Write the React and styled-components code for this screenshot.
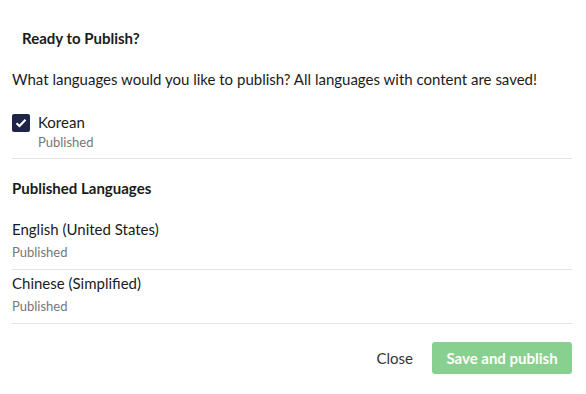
import React from "react";
import styled, { createGlobalStyle } from "styled-components";

const GlobalStyle = createGlobalStyle`
  body {
    margin: 0;
    background: #fff;
    font-family: Lato, "Open Sans", sans-serif;
    color: #1b1b1b;
  }
`;

const Modal = styled.div`
  width: 586px;
  height: 394px;
  box-sizing: border-box;
  padding: 0 14px 0 12px;
  display: flex;
  flex-direction: column;
`;

const Title = styled.h2`
  margin: 0;
  padding: 29px 0 0 10px;
  font-size: 15px;
  font-weight: 700;
  line-height: 18px;
`;

const Intro = styled.p`
  margin: 22px 0 0;
  font-size: 15px;
  line-height: 20px;
`;

const Row = styled.div`
  display: flex;
  gap: 8px;
  align-items: flex-start;
  padding: ${(p) => p.$pad || "0"};
  border-bottom: 1px solid #e4e4e4;
`;

const Box = styled.span`
  width: 18px;
  height: 18px;
  border-radius: 2px;
  background: #1e2549;
  display: flex;
  align-items: center;
  justify-content: center;
  margin-top: 2px;
`;

const Info = styled.div`
  display: flex;
  flex-direction: column;
`;

const Name = styled.span`
  font-size: 15px;
  line-height: 20px;
`;

const Status = styled.span`
  font-size: 13px;
  line-height: 16px;
  color: #777;
  margin-top: ${(p) => p.$gap || "5px"};
`;

const Heading = styled.h3`
  margin: 19px 0 0;
  font-size: 15px;
  font-weight: 700;
  line-height: 20px;
`;

const Footer = styled.div`
  display: flex;
  justify-content: flex-end;
  align-items: center;
  gap: 19px;
  margin-top: 18px;
`;

const CloseButton = styled.button`
  background: none;
  border: none;
  padding: 0;
  font-family: inherit;
  font-size: 15px;
  color: #333;
`;

const PublishButton = styled.button`
  width: 140px;
  height: 32px;
  border: none;
  border-radius: 3px;
  background: #88d08f;
  color: #fff;
  font-family: inherit;
  font-size: 15px;
  font-weight: 700;
`;

const published = ["English (United States)", "Chinese (Simplified)"];

export default function App() {
  return (
    <>
      <GlobalStyle />
      <Modal>
        <Title>Ready to Publish?</Title>
        <Intro>What languages would you like to publish? All languages with content are saved!</Intro>
        <Row $pad="23px 0 8px">
          <Box>
            <svg width="12" height="10" viewBox="0 0 12 10">
              <path d="M1.5 5.2 L4.5 8 L10.5 1.8" fill="none" stroke="#fff" strokeWidth="2.2" />
            </svg>
          </Box>
          <Info>
            <Name>Korean</Name>
            <Status $gap="2px">Published</Status>
          </Info>
        </Row>
        <Heading>Published Languages</Heading>
        {published.map((lang, i) => (
          <Row key={lang} $pad={i === 0 ? "21px 0 9px" : "3px 0 9px"}>
            <Info>
              <Name>{lang}</Name>
              <Status>Published</Status>
            </Info>
          </Row>
        ))}
        <Footer>
          <CloseButton>Close</CloseButton>
          <PublishButton>Save and publish</PublishButton>
        </Footer>
      </Modal>
    </>
  );
}
